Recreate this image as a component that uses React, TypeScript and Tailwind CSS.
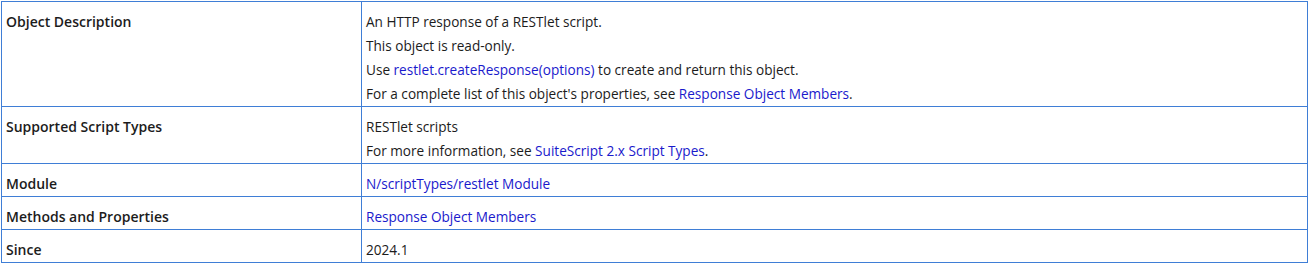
const link = "text-[#1a1acc]";

type Row = { label: string; body: React.ReactNode[] };

const rows: Row[] = [
  {
    label: "Object Description",
    body: [
      "An HTTP response of a RESTlet script.",
      "This object is read-only.",
      <>
        Use <a className={link}>restlet.createResponse(options)</a> to create and return this object.
      </>,
      <>
        For a complete list of this object's properties, see <a className={link}>Response Object Members</a>.
      </>,
    ],
  },
  {
    label: "Supported Script Types",
    body: [
      "RESTlet scripts",
      <>
        For more information, see <a className={link}>SuiteScript 2.x Script Types</a>.
      </>,
    ],
  },
  {
    label: "Module",
    body: [<a className={link}>N/scriptTypes/restlet Module</a>],
  },
  {
    label: "Methods and Properties",
    body: [<a className={link}>Response Object Members</a>],
  },
  {
    label: "Since",
    body: ["2024.1"],
  },
];

export default function App() {
  return (
    <div className="bg-white pl-px pt-px font-['Open_Sans',sans-serif] leading-6 text-[#1c1c1c]">
      <table className="w-[1307px] border-collapse border border-[#3f7ed6]">
        <tbody>
          {rows.map((row) => (
            <tr key={row.label} className="border border-[#3f7ed6] align-top">
              <th className="w-[360px] border border-[#3f7ed6] pl-1 pt-2 text-left text-[14px] font-semibold">
                {row.label}
              </th>
              <td className="border border-[#3f7ed6] pl-1 pt-2 text-[13.6px]">
                {row.body.map((line, i) => (
                  <p key={i}>{line}</p>
                ))}
              </td>
            </tr>
          ))}
        </tbody>
      </table>
    </div>
  );
}
